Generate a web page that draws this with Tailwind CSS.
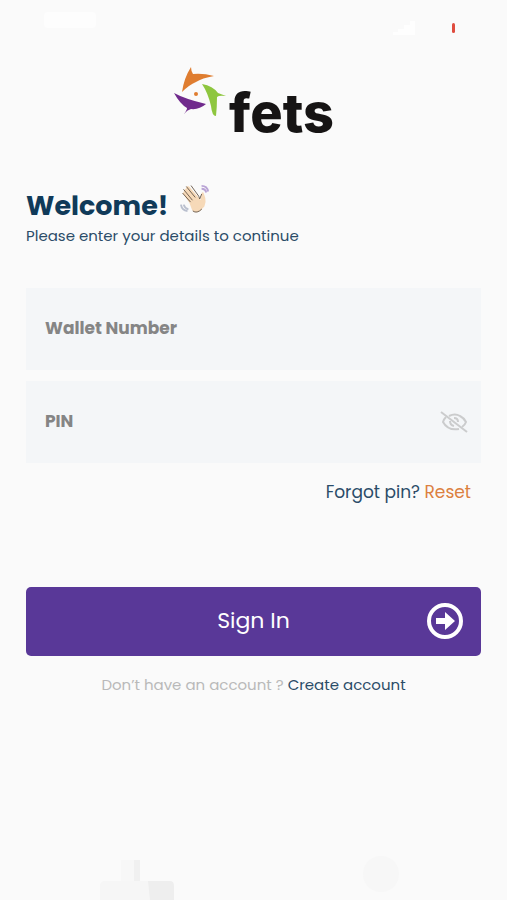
<!DOCTYPE html>
<html lang="en">
<head>
    <meta charset="UTF-8">
    <meta name="viewport" content="width=device-width, initial-scale=1.0">
    <title>Fets - Sign In</title>
    <script src="https://cdn.jsdelivr.net/npm/@tailwindcss/browser@4"></script>
</head>
<body class="relative flex min-h-screen flex-col overflow-x-hidden bg-[#fafafa] font-['Poppins','Inter',sans-serif] text-[#2b4c68]">
    <!-- Status bar -->
    <div class="flex h-14 items-start justify-between pt-3 pr-13 pl-11" aria-hidden="true">
        <div class="h-4 w-13 rounded-sm bg-[#fdfdfd]"></div>
        <div class="flex items-center gap-9 pt-2">
            <svg class="h-4 w-6" viewBox="0 0 24 16" fill="#fefefe"><path d="M1 15h22V1h-5v4h-6v4H6v3H1z"/></svg>
            <div class="h-[10px] w-[3px] rounded-sm bg-[#df4c3f]"></div>
        </div>
    </div>

    <main class="px-[26px]">
        <!-- Logo -->
        <div class="flex h-20 justify-center gap-[3px] pt-[10px]">
            <svg class="h-[50px] w-[53px] shrink-0" viewBox="0 0 53 50" aria-hidden="true">
                <path d="M18 1Q18 5 20 8Q30 7 41 10Q29 12 23 16Q16 19 9 26Q11 12 18 1Z" fill="#df7d30"/>
                <path d="M29 18Q40 20 45 27L53 30Q46 29 44 31Q44 41 43 50Q39 50 38 40Q35 27 29 18Z" fill="#8ec63f"/>
                <path d="M1 27Q12 33 33 38Q26 44 18 43Q14 44 11 48Q14 44 14 42Q7 38 1 27Z" fill="#702a8c"/>
                <circle cx="23" cy="28" r="2" fill="#df7d30" />
            </svg>
            <span class="pt-[22px] font-['Inter',sans-serif] text-[54px] leading-[50px] font-extrabold text-[#161414]">fets</span>
        </div>

        <!-- Heading -->
        <div class="flex items-start gap-3 pt-12">
            <h1 class="pt-1 text-[27px] leading-9 font-bold text-[#103a59]">Welcome!</h1>
            <svg class="h-[30px] w-[30px]" viewBox="0 0 32 32" role="img" aria-label="Waving hand">
                <path d="M3 10L10 20L13 28Q17 32 22 28L26 24Q28 19 27 15L25 9Q23 8 23 11L22 17L10 3Q7 1 7 4L5 6L3 10Z" fill="#f6d9b8"/>
                <path d="M3 10L11 19M4 6L13 17M7 3L16 14M12 2L20 13L21 16L23 11M14 29Q18 32 23 27" fill="none" stroke="#6b5b4c" stroke-width="1" stroke-linecap="round"/>
                <path d="M23 2Q29 2 30 8M23 5Q27 5 28 9" fill="none" stroke="#b9a3d5" stroke-width="2"/>
                <path d="M1 22Q2 28 8 29M4 22Q5 26 9 27" fill="none" stroke="#b9bfce" stroke-width="2"/>
            </svg>
        </div>
        <p class="text-[15px] leading-6">Please enter your details to continue</p>

        <form class="pt-10">
            <!-- The label sits in the field until something is typed -->
            <div class="flex flex-col gap-[11px] text-[17px] font-bold">
                <div class="grid h-[82px] items-center bg-[#f4f6f8]">
                    <input id="wallet" type="text" inputmode="numeric" placeholder=" " class="peer col-start-1 row-start-1 h-full w-full px-[19px]">
                    <label for="wallet" class="pointer-events-none col-start-1 row-start-1 px-[19px] text-[#858585] peer-[:not(:placeholder-shown)]:hidden">Wallet Number</label>
                </div>
                <div class="grid h-[82px] grid-cols-[1fr_auto] items-center bg-[#f4f6f8] pr-[13px]">
                    <input id="pin" type="password" placeholder=" " class="peer col-start-1 row-start-1 h-full w-full px-[19px]">
                    <label for="pin" class="pointer-events-none col-start-1 row-start-1 px-[19px] text-[#858585] peer-[:not(:placeholder-shown)]:hidden">PIN</label>
                    <button type="button" aria-label="Show PIN">
                        <svg class="h-6 w-7" viewBox="0 0 28 24" fill="none" stroke="#cbcccd" stroke-width="2">
                            <path d="M9 6Q15 3 20 6Q24 8 26 12Q25 15 22 17M6 7Q4 9 3 12Q8 21 19 19"/>
                            <path d="M14 8Q18 8 18 12M10 11Q10 15 14 16"/>
                            <path d="M1 2L27 22"/>
                        </svg>
                    </button>
                </div>
            </div>

            <p class="pt-[15px] pr-[10px] text-right text-[17px] leading-7">Forgot pin? <a href="#" class="text-[#dc8040]">Reset</a></p>

            <button type="submit" class="mt-[81px] grid h-[69px] w-full grid-cols-[1fr_auto_1fr] items-center rounded-[5px] bg-[#593898] px-[18px] pb-[2px] text-white">
                <span class="col-start-2 text-[22px] leading-8">Sign In</span>
                <svg class="h-9 w-9 justify-self-end" viewBox="0 0 36 36" aria-hidden="true">
                    <circle cx="18" cy="18" r="16" fill="none" stroke="#fff" stroke-width="4"/>
                    <path d="M9 15H18V9L28 18L18 27V21H9Z" fill="#fff"/>
                </svg>
            </button>
        </form>

        <p class="pt-[17px] text-center text-[15px] leading-6 text-[#b9b9b9]">Don’t have an account ? <a href="#" class="text-[#2b4c68]">Create account</a></p>
    </main>

    <!-- Faint shapes at the foot of the screen -->
    <div class="mt-auto flex h-11 items-start justify-between overflow-hidden pr-[108px] pl-[100px]" aria-hidden="true">
        <svg class="h-11 w-20" viewBox="0 0 80 44">
            <path d="M21 4H34V25H21Z" fill="#f7f7f7"/>
            <path d="M34 4H40V25H34Z" fill="#f0f0f0"/>
            <path d="M0 30Q0 25 5 25H50V44H0Z" fill="#f6f6f6"/>
            <path d="M48 25H70Q74 25 74 30V44H50Z" fill="#eeeeee"/>
        </svg>
        <div class="h-9 w-9 rounded-full bg-[#f7f7f7]"></div>
    </div>
</body>
</html>
